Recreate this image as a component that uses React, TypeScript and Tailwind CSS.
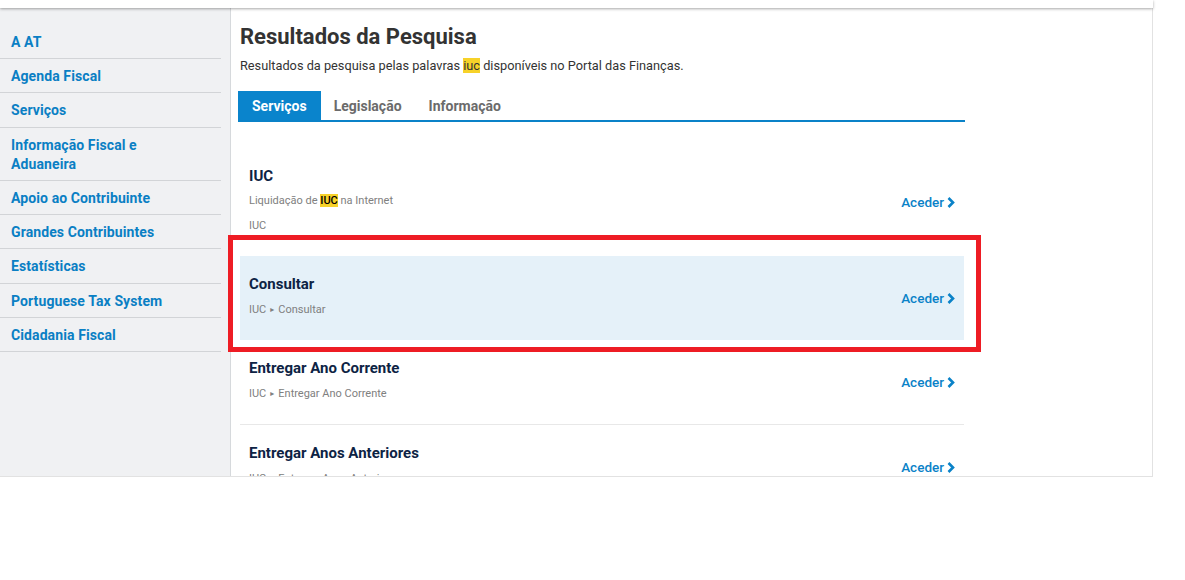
import React from "react";

const sideItems = [
  "A AT",
  "Agenda Fiscal",
  "Serviços",
  "Informação Fiscal e Aduaneira",
  "Apoio ao Contribuinte",
  "Grandes Contribuintes",
  "Estatísticas",
  "Portuguese Tax System",
  "Cidadania Fiscal",
];

function Chevron() {
  return (
    <svg width="8" height="11" viewBox="0 0 8 11" className="ml-[3px]">
      <path d="M1.5 1 L6 5.5 L1.5 10" fill="none" stroke="#0a82c8" strokeWidth="2.6" strokeLinejoin="miter" />
    </svg>
  );
}

function Aceder() {
  return (
    <a className="flex items-center text-[13.5px] font-medium text-[#0a82c8] mr-[9px] mt-[5px]">
      Aceder
      <Chevron />
    </a>
  );
}

function Crumb({ last }: { last: string }) {
  return (
    <div className="mt-[8px] text-[11px] leading-[16px] text-[#808080] flex items-center">
      IUC
      <span className="mx-[4px] text-[8px] font-['DejaVu_Sans',sans-serif]">▸</span>
      {last}
    </div>
  );
}

function Item({
  title,
  children,
  highlight,
  border,
}: {
  title: string;
  children: React.ReactNode;
  highlight?: boolean;
  border?: boolean;
}) {
  return (
    <div
      className={
        "flex items-center justify-between pl-[9px] pt-[18px] pb-[22px] " +
        (highlight ? "bg-[#e5f1f9] " : "") +
        (border ? "border-b border-[#e8e8e8]" : "")
      }
    >
      <div>
        <div className="text-[15px] leading-[20px] font-bold text-[#0d2344]">{title}</div>
        {children}
      </div>
      <Aceder />
    </div>
  );
}

export default function App() {
  return (
    <div className="relative w-[1185px] h-[580px] bg-white font-['Roboto',sans-serif]">
      <div className="relative z-10 h-[8px] w-[1153px] bg-white shadow-[0_1px_3px_rgba(0,0,0,0.35)]" />
      <div className="w-[1153px] h-[469px] overflow-hidden border-r border-b border-[#e2e2e2] flex">
        <aside className="w-[231px] shrink-0 bg-[#f0f1f3] border-r border-[#d6d9dc] pt-[16.7px]">
          <ul className="w-[221px]">
            {sideItems.map((s) => (
              <li
                key={s}
                className="pl-[11px] pr-[40px] pt-[8px] pb-[6.3px] border-b border-[#d2d4d7] text-[14px] leading-[19px] font-bold tracking-[0.1px] text-[#0a7fc4]"
              >
                {s}
              </li>
            ))}
          </ul>
        </aside>
        <main className="flex-1 pl-[7px] pt-[15px]">
          <h1 className="ml-[2px] text-[22px] leading-[28px] font-bold text-[#333333]">
            Resultados da Pesquisa
          </h1>
          <p className="ml-[2px] mt-[6px] text-[12.75px] leading-[18px] text-[#333333]">
            Resultados da pesquisa pelas palavras <span className="bg-[#f7d229]">iuc</span> disponíveis no Portal das Finanças.
          </p>
          <div className="mt-[16px] w-[727px] flex border-b-2 border-[#0a82c8]">
            <div className="h-[29px] pt-[1px] px-[14px] flex items-center bg-[#0a84cc] text-white text-[14px] font-bold">
              Serviços
            </div>
            <div className="h-[29px] pt-[1px] px-[13px] flex items-center text-[#6b6b6b] text-[14px] font-bold">
              Legislação
            </div>
            <div className="h-[29px] pt-[1px] px-[14px] flex items-center text-[#6b6b6b] text-[14px] font-bold">
              Informação
            </div>
          </div>
          <div className="ml-[2px] w-[724px] mt-[26px]">
            <Item title="IUC">
              <div className="mt-[7px] text-[11px] leading-[16px] text-[#808080]">
                Liquidação de <span className="bg-[#f7d229] text-black font-medium">IUC</span> na Internet
              </div>
              <div className="mt-[9px] text-[11px] leading-[16px] text-[#808080]">IUC</div>
            </Item>
            <Item title="Consultar" highlight>
              <Crumb last="Consultar" />
            </Item>
            <Item title="Entregar Ano Corrente" border>
              <Crumb last="Entregar Ano Corrente" />
            </Item>
            <Item title="Entregar Anos Anteriores">
              <Crumb last="Entregar Anos Anteriores" />
            </Item>
          </div>
        </main>
      </div>
      <div className="absolute left-[228px] top-[235px] w-[753px] h-[117px] border-[5px] border-[#ee1c24] pointer-events-none" />
    </div>
  );
}
